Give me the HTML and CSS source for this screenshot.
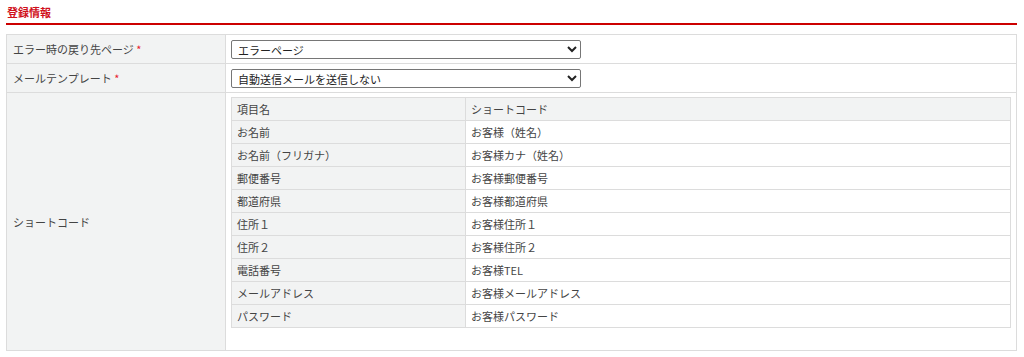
FILE: index.html
```html
<!DOCTYPE html>
<html lang="ja">
<head>
<meta charset="utf-8">
<link rel="stylesheet" href="styles.css">
</head>
<body>
<div class="page">
  <h2 class="section-title">登録情報</h2>
  <table class="form-table">
    <tr class="row-sm">
      <th>エラー時の戻り先ページ <span class="req">*</span></th>
      <td>
        <select class="sel"><option>エラーページ</option></select>
      </td>
    </tr>
    <tr class="row-sm">
      <th>メールテンプレート <span class="req">*</span></th>
      <td>
        <select class="sel"><option>自動送信メールを送信しない</option></select>
      </td>
    </tr>
    <tr>
      <th>ショートコード</th>
      <td class="code-cell">
        <table class="code-table">
          <tr class="head"><td>項目名</td><td>ショートコード</td></tr>
          <tr><td>お名前</td><td>お客様（姓名）</td></tr>
          <tr><td>お名前（フリガナ）</td><td>お客様カナ（姓名）</td></tr>
          <tr><td>郵便番号</td><td>お客様郵便番号</td></tr>
          <tr><td>都道府県</td><td>お客様都道府県</td></tr>
          <tr><td>住所１</td><td>お客様住所１</td></tr>
          <tr><td>住所２</td><td>お客様住所２</td></tr>
          <tr><td>電話番号</td><td>お客様TEL</td></tr>
          <tr><td>メールアドレス</td><td>お客様メールアドレス</td></tr>
          <tr><td>パスワード</td><td>お客様パスワード</td></tr>
        </table>
      </td>
    </tr>
  </table>
</div>
</body>
</html>
```
FILE: styles.css
```css
html, body {
  margin: 0;
  padding: 0;
  background: #fff;
}
body {
  font-family: "Noto Sans CJK JP", "Noto Sans", sans-serif;
  font-size: 11px;
  color: #444;
}
.page {
  padding: 0 7px 0 6px;
}
.section-title {
  margin: 0;
  padding: 3px 0 0 1px;
  height: 20px;
  font-size: 11px;
  font-weight: bold;
  line-height: 18px;
  color: #d0101b;
  border-bottom: 2px solid #cc0000;
}
.form-table {
  margin-top: 9px;
  width: 100%;
  border-collapse: collapse;
  border: 1px solid #dcdcdc;
}
.form-table > tbody > tr > th,
.form-table > tbody > tr > td {
  border: 1px solid #dcdcdc;
}
.form-table th {
  width: 206px;
  background: #f2f3f3;
  font-weight: normal;
  text-align: left;
  padding: 0 6px;
  font-size: 11px;
  color: #444;
}
.row-sm > th,
.row-sm > td {
  height: 28px;
}
.form-table > tbody > tr > td {
  padding: 0 5px;
}
.req {
  color: #e8202a;
}
.sel {
  width: 350px;
  height: 19px;
  font-family: "Noto Sans CJK JP", "Noto Sans", sans-serif;
  font-size: 11px;
  color: #222;
  padding: 0 2px;
  border: 1px solid #767676;
  border-radius: 2px;
  background: #fff;
  display: block;
}
.form-table > tbody > tr > td.code-cell {
  padding: 4px 5px 22px 5px;
  vertical-align: top;
}
.code-table {
  width: 100%;
  border-collapse: collapse;
  border: 1px solid #dcdcdc;
}
.code-table td {
  border: 1px solid #dcdcdc;
  height: 22px;
  padding: 0 5px;
  font-size: 11px;
  color: #444;
  background: #fff;
}
.code-table td:first-child {
  width: 223px;
  background: #f2f3f3;
}
.code-table tr.head td {
  background: #f2f3f3;
}
```
